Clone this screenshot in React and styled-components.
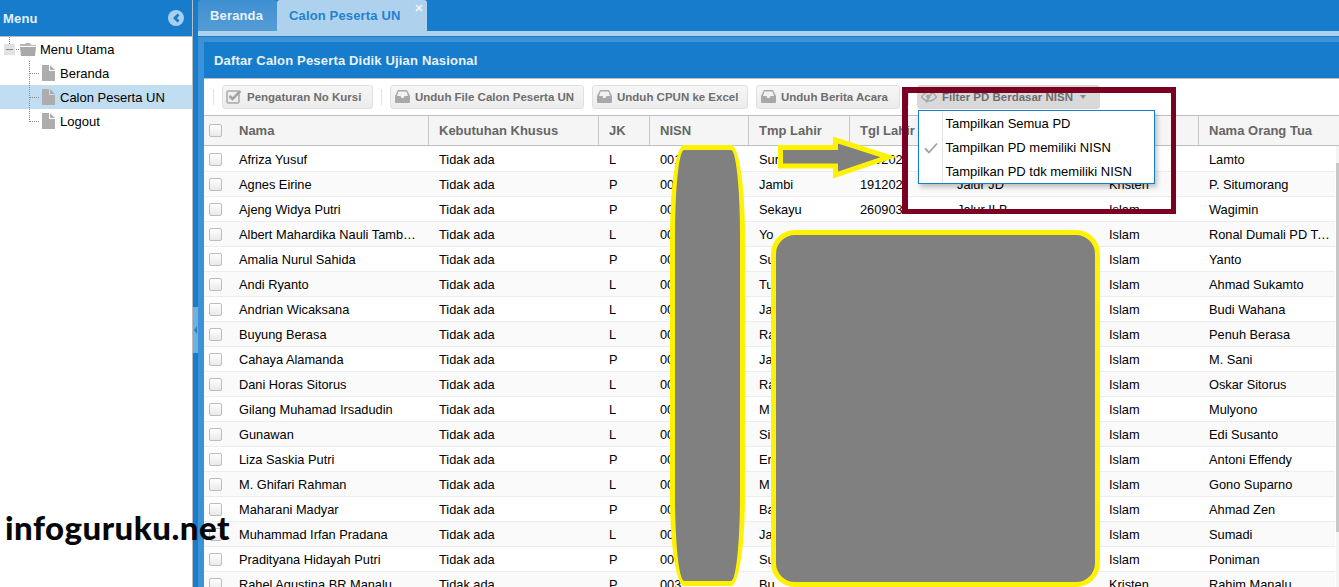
import React from 'react';
import styled, { createGlobalStyle } from 'styled-components';

const GlobalStyle = createGlobalStyle`
  html, body {
    margin: 0;
    height: 100%;
    overflow: hidden;
    background: #fff;
  }
  #root {
    height: 100%;
  }
`;

const Page = styled.div`
  position: relative;
  display: flex;
  width: 1339px;
  height: 587px;
  overflow: hidden;
  font-family: 'Liberation Sans', Arial, sans-serif;
  font-size: 12.8px;
  color: #000;
`;

/* left menu */
const Sidebar = styled.aside`
  flex: 0 0 192px;
  display: flex;
  flex-direction: column;
  background: #fff;
`;

const SideHeader = styled.div`
  height: 36px;
  flex: none;
  display: flex;
  align-items: center;
  justify-content: space-between;
  padding: 0 7px 0 3px;
  background: #177ccb;
  border-bottom: 1px solid #bcbcbc;
  color: #e6f1fa;
  font-size: 13px;
  font-weight: bold;
  letter-spacing: 0.2px;
`;

const TreeList = styled.div`
  position: relative;
  display: flex;
  flex-direction: column;
`;

const TreeRow = styled.div`
  display: flex;
  align-items: center;
  height: 24px;
  padding-left: ${(p) => (p.$root ? 20 : 42)}px;
  background: ${(p) => (p.$active ? '#c1ddf1' : 'transparent')};
`;

const TreeLabel = styled.span`
  margin-left: ${(p) => (p.$root ? 4 : 5)}px;
  font-size: 13px;
  line-height: 25px;
`;

const TreeLines = styled.svg`
  position: absolute;
  left: 0;
  top: 0;
`;

/* splitter */
const Splitter = styled.div`
  position: relative;
  flex: 0 0 6px;
  background: #177ccb;
  border-left: 1px solid #bcbcbc;
  box-sizing: border-box;
`;

const SplitterHandle = styled.div`
  position: absolute;
  left: 0;
  top: 307px;
  width: 5px;
  height: 46px;
  display: flex;
  align-items: center;
  background: #6fb0e2;
  &::before {
    content: '';
    border-style: solid;
    border-width: 4px 3px 4px 0;
    border-color: transparent #2c7fc4 transparent transparent;
    margin-left: 1px;
  }
`;

/* main area */
const Main = styled.main`
  flex: 1;
  min-width: 0;
  display: flex;
  flex-direction: column;
  background: #177ccb;
`;

const TabBar = styled.div`
  flex: none;
  display: flex;
  height: 31px;
`;

const Tab = styled.div`
  position: relative;
  display: flex;
  align-items: center;
  box-sizing: border-box;
  width: ${(p) => p.$w}px;
  padding-left: 12px;
  border-radius: 3px 3px 0 0;
  background: ${(p) => (p.$active ? '#aed2ee' : 'linear-gradient(#3e8fd2, #559cd6)')};
  color: ${(p) => (p.$active ? '#1f83cf' : '#e8f2fa')};
  font-size: 13px;
  font-weight: bold;
  letter-spacing: 0.15px;
`;

const TabClose = styled.span`
  position: absolute;
  top: 2px;
  right: 2px;
  width: 12px;
  height: 12px;
  font-size: 15px;
  line-height: 12px;
  text-align: center;
  color: #fff;
  font-weight: normal;
`;

const TabStrip = styled.div`
  flex: none;
  height: 5px;
  background: #aed2ee;
`;

const TabBody = styled.div`
  flex: 1;
  min-height: 0;
  display: flex;
  flex-direction: column;
  margin-top: 1px;
  padding: 5px 0 0 6px;
  background: #3c92d6;
`;

const PanelHeader = styled.div`
  flex: none;
  height: 36px;
  display: flex;
  align-items: center;
  padding-left: 10px;
  background: #177ccb;
  color: #e8f2fa;
  font-size: 13px;
  font-weight: bold;
  letter-spacing: 0.17px;
`;

const Toolbar = styled.div`
  flex: none;
  box-sizing: border-box;
  height: 37px;
  display: flex;
  align-items: center;
  gap: 8px;
  padding: 0 0 0 9px;
  background: #fff;
  border-top: 1px solid #bcbcbc;
`;

const ToolSeparator = styled.div`
  width: 0;
  height: 16px;
  border-left: 1px solid #e1e1e1;
`;

const ToolButton = styled.div`
  box-sizing: border-box;
  width: ${(p) => p.$w}px;
  height: 24px;
  display: flex;
  align-items: center;
  gap: 5px;
  padding-left: ${(p) => p.$pad}px;
  padding-bottom: 1px;
  border: 1px solid ${(p) => (p.$open ? '#d8d8d8' : '#e0e0e0')};
  border-radius: 3px;
  background: ${(p) => (p.$open ? '#d9d9d9' : 'linear-gradient(#f6f6f6, #ececec)')};
  color: #6e6e6e;
  font-size: 11.5px;
  font-weight: bold;
  white-space: nowrap;
`;

const Caret = styled.span`
  margin-left: 2px;
  border-style: solid;
  border-width: 4px 3.5px 0;
  border-color: #8b8b8b transparent transparent;
`;

/* grid */
const Grid = styled.div`
  flex: 1;
  min-height: 0;
  display: flex;
  flex-direction: column;
  background: #fff;
  overflow: hidden;
`;

const HeaderRow = styled.div`
  flex: none;
  box-sizing: border-box;
  height: 31px;
  display: flex;
  background: #f5f5f5;
  border-top: 1px solid #c0c0c0;
  border-bottom: 1px solid #c0c0c0;
  padding-right: 10px;
`;

const HeaderCell = styled.div`
  box-sizing: border-box;
  flex: 0 0 ${(p) => p.$w}px;
  display: flex;
  align-items: center;
  padding-left: 10px;
  border-right: 1px solid #c8c8c8;
  color: #666;
  font-size: 13px;
  font-weight: bold;
  white-space: nowrap;
  &:last-child {
    border-right: none;
  }
`;

const CheckCell = styled.div`
  box-sizing: border-box;
  flex: 0 0 25px;
  display: flex;
  align-items: center;
  padding-left: 5px;
`;

const Checkbox = styled.span`
  box-sizing: border-box;
  width: 13px;
  height: 13px;
  border: 1px solid #bdbdbd;
  border-radius: 2px;
  background: linear-gradient(#fff, #e9e9e9);
`;

const BodyWrap = styled.div`
  position: relative;
  flex: 1;
  min-height: 0;
  overflow: hidden;
  padding-top: 1px;
`;

const Row = styled.div`
  box-sizing: border-box;
  height: 25px;
  display: flex;
  background: ${(p) => (p.$alt ? '#fafafa' : '#fff')};
  border-bottom: 1px solid #ececec;
  width: 1131px;
`;

const Cell = styled.div`
  box-sizing: border-box;
  flex: 0 0 ${(p) => p.$w}px;
  padding: 0 10px;
  line-height: 26px;
  white-space: nowrap;
  overflow: hidden;
  text-overflow: ellipsis;
  &:last-child {
    padding-right: 0;
  }
`;

const ScrollTrack = styled.div`
  position: absolute;
  top: 0;
  right: 0;
  bottom: 0;
  width: 3px;
  background: #f4f4f4;
`;

const ScrollThumb = styled.div`
  position: absolute;
  top: 17px;
  left: 0;
  width: 3px;
  height: 369px;
  background: #c8c8c8;
`;

/* dropdown menu of the filter button */
const Menu = styled.div`
  position: absolute;
  left: 918px;
  top: 110px;
  width: 237px;
  height: 74px;
  box-sizing: border-box;
  padding: 1px 0;
  background: #fff;
  border: 1px solid #157fcc;
  box-shadow: 2px 3px 5px rgba(0, 0, 0, 0.25);
  &::before {
    content: '';
    position: absolute;
    left: 23px;
    top: 0;
    bottom: 0;
    border-left: 1px solid #e4e4e4;
  }
`;

const MenuItem = styled.div`
  position: relative;
  height: 24px;
  font-size: 13px;
  line-height: 23px;
  padding-left: 26.500px;
  white-space: nowrap;
`;

const MenuCheck = styled.svg`
  position: absolute;
  left: 5px;
  top: 6px;
`;

/* annotations drawn on top of the screenshot */
const RedFrame = styled.div`
  position: absolute;
  left: 902px;
  top: 87px;
  width: 274px;
  height: 127px;
  box-sizing: border-box;
  border: solid #7c0021;
  border-width: 6px 5px 5px 6px;
`;

const Redaction = styled.div`
  position: absolute;
  box-sizing: border-box;
  left: ${(p) => p.$x}px;
  top: ${(p) => p.$y}px;
  width: ${(p) => p.$w}px;
  height: ${(p) => p.$h}px;
  background: #808080;
  border: 5px solid #fff200;
  border-radius: ${(p) => p.$r};
`;

const ArrowMark = styled.svg`
  position: absolute;
  left: 776px;
  top: 134px;
`;

const Watermark = styled.div`
  position: absolute;
  left: 5px;
  top: 507px;
  font-family: Lato, sans-serif;
  font-size: 33px;
  font-weight: 900;
  letter-spacing: 0.500px;
  line-height: 40px;
  color: #05070a;
  white-space: nowrap;
`;

const FolderIcon = () => (
  <svg width="16" height="13" viewBox="0 0 16 13">
    <path d="M0 1h5l1-1h4l1 2h5v1H0z" fill="#b5b5b5" />
    <path d="M0 4h16l-1 9H1z" fill="#a9a9a9" />
  </svg>
);

const LeafIcon = () => (
  <svg width="13" height="16" viewBox="0 0 13 16">
    <path d="M0 0h7v6h6v10H0z" fill="#adadad" />
    <path d="M8 0l5 5H8z" fill="#adadad" />
  </svg>
);

const CollapseIcon = () => (
  <svg width="18" height="16" viewBox="0 0 18 16">
    <circle cx="9" cy="8" r="8" fill="#a9cfee" />
    <path d="M10.500 3.500L6 8l4.500 4.500 2-2L10 8l2.500-2.500z" fill="#177ccb" />
  </svg>
);

const CheckBoxIcon = () => (
  <svg width="16" height="15" viewBox="0 0 16 15">
    <rect x="1" y="2" width="12" height="12" rx="1.500" fill="#efefef" stroke="#a9a9a9" strokeWidth="1.500" />
    <path d="M3.500 7l3 3 8-8" fill="none" stroke="#a3a3a3" strokeWidth="2.500" />
  </svg>
);

const TrayIcon = () => (
  <svg width="15" height="13" viewBox="0 0 15 13">
    <path d="M3 0h9l3 6v6a1 1 0 0 1-1 1H1a1 1 0 0 1-1-1V6z" fill="#a8a8a8" />
    <path d="M3.500 1.500h8L13 6H9.500l-1 2h-2l-1-2H2z" fill="#f2f2f2" />
  </svg>
);

const EyeIcon = () => (
  <svg width="16" height="13" viewBox="0 0 16 13">
    <path d="M0.500 7C3 3 6 2 8 2s5 1 7.500 5C13 10 10 11 8 11S3 10 0.500 7z" fill="none" stroke="#a6a6a6" strokeWidth="1.500" />
    <circle cx="7" cy="6.500" r="2" fill="#a6a6a6" />
    <path d="M5 12.500L12 0.500" stroke="#a6a6a6" strokeWidth="1.500" />
  </svg>
);

const columns = [
  { key: 'nama', title: 'Nama', w: 200 },
  { key: 'kk', title: 'Kebutuhan Khusus', w: 170 },
  { key: 'jk', title: 'JK', w: 51 },
  { key: 'nisn', title: 'NISN', w: 99 },
  { key: 'tmp', title: 'Tmp Lahir', w: 101 },
  { key: 'tgl', title: 'Tgl Lahir', w: 97 },
  { key: 'jalur', title: 'Jalur', w: 152 },
  { key: 'agama', title: 'Agama', w: 100 },
  { key: 'ortu', title: 'Nama Orang Tua', w: 130 },
];

const rows = [
  ['Afriza Yusuf', 'L', '001', 'Sur', '150202', '', 'Islam', 'Lamto'],
  ['Agnes Eirine', 'P', '00', 'Jambi', '191202', 'Jalur JD', 'Kristen', 'P. Situmorang'],
  ['Ajeng Widya Putri', 'P', '00', 'Sekayu', '260903', 'Jalur II B', 'Islam', 'Wagimin'],
  ['Albert Mahardika Nauli Tambunan', 'L', '00', 'Yo', '', '', 'Islam', 'Ronal Dumali PD Tambunan'],
  ['Amalia Nurul Sahida', 'P', '00', 'Su', '', '', 'Islam', 'Yanto'],
  ['Andi Ryanto', 'L', '00', 'Tu', '', '', 'Islam', 'Ahmad Sukamto'],
  ['Andrian Wicaksana', 'L', '00', 'Ja', '', '', 'Islam', 'Budi Wahana'],
  ['Buyung Berasa', 'L', '00', 'Ra', '', '', 'Islam', 'Penuh Berasa'],
  ['Cahaya Alamanda', 'P', '00', 'Ja', '', '', 'Islam', 'M. Sani'],
  ['Dani Horas Sitorus', 'L', '00', 'Ra', '', '', 'Islam', 'Oskar Sitorus'],
  ['Gilang Muhamad Irsadudin', 'L', '00', 'M', '', '', 'Islam', 'Mulyono'],
  ['Gunawan', 'L', '00', 'Si', '', '', 'Islam', 'Edi Susanto'],
  ['Liza Saskia Putri', 'P', '00', 'Er', '', '', 'Islam', 'Antoni Effendy'],
  ['M. Ghifari Rahman', 'L', '00', 'M', '', '', 'Islam', 'Gono Suparno'],
  ['Maharani Madyar', 'P', '00', 'Ba', '', '', 'Islam', 'Ahmad Zen'],
  ['Muhammad Irfan Pradana', 'L', '00', 'Ja', '', '', 'Islam', 'Sumadi'],
  ['Pradityana Hidayah Putri', 'P', '00', 'Su', '', '', 'Islam', 'Poniman'],
  ['Rahel Agustina BR Manalu', 'P', '003', 'Bu', '', '', 'Kristen', 'Rahim Manalu'],
];

const buttons = [
  { label: 'Pengaturan No Kursi', w: 151, pad: 3, icon: <CheckBoxIcon />, sepAfter: true },
  { label: 'Unduh File Calon Peserta UN', w: 194, pad: 4, icon: <TrayIcon /> },
  { label: 'Unduh CPUN ke Excel', w: 156, pad: 4, icon: <TrayIcon /> },
  { label: 'Unduh Berita Acara', w: 144, pad: 4, icon: <TrayIcon />, sepAfter: true },
];

const App = () => (
  <Page>
    <GlobalStyle />
    <Sidebar>
      <SideHeader>
        Menu
        <CollapseIcon />
      </SideHeader>
      <TreeList>
        <TreeLines width="44" height="130">
          <path d="M9.500 0v7M16 12.500h3M29.500 24v61M30 36.500h10M30 60.500h10M30 84.500h10" stroke="#8a8a8a" strokeDasharray="1 1" fill="none" />
          <rect x="4" y="7" width="11" height="11" fill="#dfe3e6" />
          <path d="M6 12.500h7" stroke="#8a8a8a" />
        </TreeLines>
        <TreeRow $root>
          <FolderIcon />
          <TreeLabel $root>Menu Utama</TreeLabel>
        </TreeRow>
        <TreeRow>
          <LeafIcon />
          <TreeLabel>Beranda</TreeLabel>
        </TreeRow>
        <TreeRow $active>
          <LeafIcon />
          <TreeLabel>Calon Peserta UN</TreeLabel>
        </TreeRow>
        <TreeRow>
          <LeafIcon />
          <TreeLabel>Logout</TreeLabel>
        </TreeRow>
      </TreeList>
    </Sidebar>
    <Splitter>
      <SplitterHandle />
    </Splitter>
    <Main>
      <TabBar>
        <Tab $w={79}>Beranda</Tab>
        <Tab $active $w={150}>
          Calon Peserta UN
          <TabClose>×</TabClose>
        </Tab>
      </TabBar>
      <TabStrip />
      <TabBody>
        <PanelHeader>Daftar Calon Peserta Didik Ujian Nasional</PanelHeader>
        <Toolbar>
          <ToolSeparator />
          {buttons.map((b) => (
            <React.Fragment key={b.label}>
              <ToolButton $w={b.w} $pad={b.pad}>
                {b.icon}
                {b.label}
              </ToolButton>
              {b.sepAfter && <ToolSeparator />}
            </React.Fragment>
          ))}
          <ToolButton $open $w={183} $pad={3}>
            <EyeIcon />
            Filter PD Berdasar NISN
            <Caret />
          </ToolButton>
        </Toolbar>
        <Grid>
          <HeaderRow>
            <CheckCell>
              <Checkbox />
            </CheckCell>
            {columns.map((c) => (
              <HeaderCell key={c.key} $w={c.w}>
                {c.title}
              </HeaderCell>
            ))}
          </HeaderRow>
          <BodyWrap>
            {rows.map((r, i) => (
              <Row key={r[0]} $alt={i % 2 === 1}>
                <CheckCell>
                  <Checkbox />
                </CheckCell>
                <Cell $w={200}>{r[0]}</Cell>
                <Cell $w={170}>Tidak ada</Cell>
                <Cell $w={51}>{r[1]}</Cell>
                <Cell $w={99}>{r[2]}</Cell>
                <Cell $w={101}>{r[3]}</Cell>
                <Cell $w={97}>{r[4]}</Cell>
                <Cell $w={152}>{r[5]}</Cell>
                <Cell $w={100}>{r[6]}</Cell>
                <Cell $w={136}>{r[7]}</Cell>
              </Row>
            ))}
            <ScrollTrack>
              <ScrollThumb />
            </ScrollTrack>
          </BodyWrap>
        </Grid>
      </TabBody>
    </Main>

    <Menu>
      <MenuItem>Tampilkan Semua PD</MenuItem>
      <MenuItem>
        <MenuCheck width="14" height="12" viewBox="0 0 14 12">
          <path d="M1 6.500l4 4 8-9" fill="none" stroke="#a3a3a3" strokeWidth="1.800" />
        </MenuCheck>
        Tampilkan PD memiliki NISN
      </MenuItem>
      <MenuItem>Tampilkan PD tdk memiliki NISN</MenuItem>
    </Menu>

    <RedFrame />
    <Redaction $x={670} $y={145} $w={75} $h={441} $r="14px / 90px" />
    <Redaction $x={771} $y={230} $w={329} $h={357} $r="24px" />
    <ArrowMark width="122" height="50" viewBox="0 0 122 50">
      <path d="M4.500 13.500h55V6l53 17-53 18v-9h-55z" fill="#808080" stroke="#fff200" strokeWidth="5" />
    </ArrowMark>
    <Watermark>infoguruku.net</Watermark>
  </Page>
);

export default App;
